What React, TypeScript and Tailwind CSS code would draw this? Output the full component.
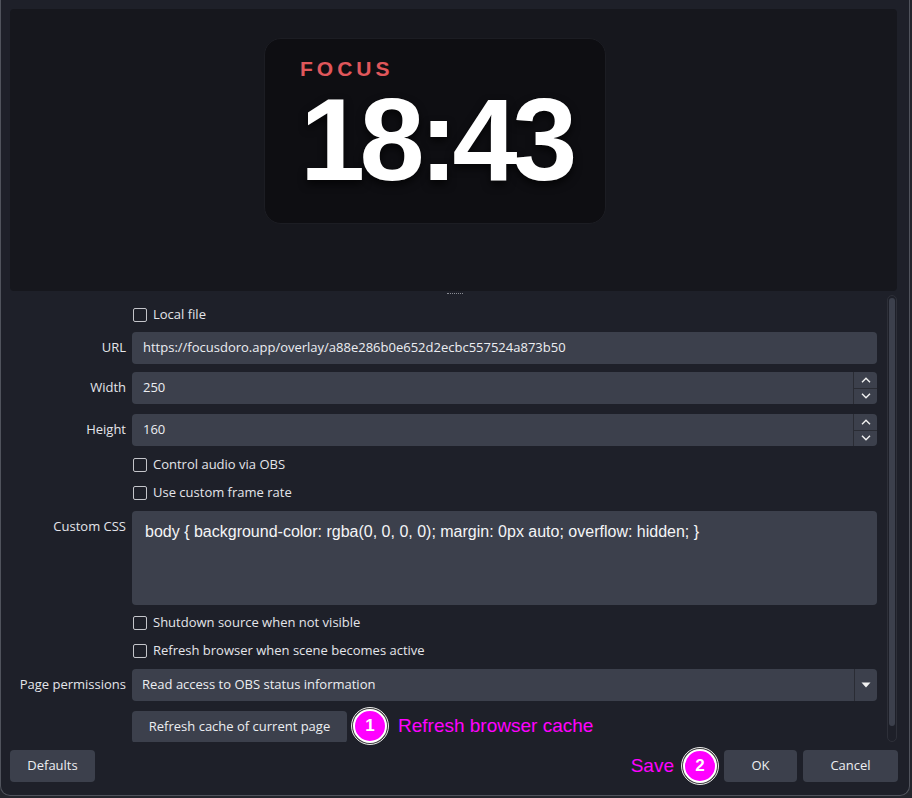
import React from 'react';

const ui = "font-['Open_Sans',sans-serif]";

function Checkbox({ label }: { label: string }) {
  return (
    <div className="flex h-[20px] items-center gap-[6px]">
      <span className="ml-[1px] h-[14px] w-[14px] rounded-[2px] border border-[#c4c5ca]" />
      <span className="text-[13px] text-[#e4e5ea]">{label}</span>
    </div>
  );
}

function Chevron({ up }: { up?: boolean }) {
  return (
    <svg width="10" height="6" viewBox="0 0 10 6" className="block">
      <path
        d={up ? 'M1 5.2 L5 1.2 L9 5.2' : 'M1 0.8 L5 4.8 L9 0.8'}
        fill="none"
        stroke="#f2f2f2"
        strokeWidth="1.4"
      />
    </svg>
  );
}

function Row({ label, top, children, alignTop }: { label?: string; top: string; children: React.ReactNode; alignTop?: boolean }) {
  return (
    <div className={`flex ${top} ${alignTop ? 'items-start' : 'items-center'}`}>
      <div className={`w-[125px] shrink-0 text-right text-[13px] text-[#e4e5ea] ${alignTop ? 'pt-[6px]' : ''}`}>{label}</div>
      <div className="ml-[6px] flex-1">{children}</div>
    </div>
  );
}

function SpinInput({ value }: { value: string }) {
  return (
    <div className="flex h-[32px] items-stretch rounded-[4px] bg-[#3c404c]">
      <div className="flex flex-1 items-center pl-[11px] text-[13px] text-[#eceef2]">{value}</div>
      <div className="flex w-[24px] flex-col border-l border-[#2a2c34]">
        <div className="flex flex-1 items-center justify-center border-b border-[#2a2c34]">
          <Chevron up />
        </div>
        <div className="flex flex-1 items-center justify-center">
          <Chevron />
        </div>
      </div>
    </div>
  );
}

function Marker({ n }: { n: string }) {
  return (
    <div className="flex h-[38px] w-[38px] items-center justify-center rounded-full border border-[#e8e8e8] bg-[#3a3a3a] p-[1px]">
      <div className="flex h-full w-full items-center justify-center rounded-full border-[2px] border-white bg-[#ff00ff] font-['Liberation_Sans',sans-serif] text-[17px] font-bold text-white">
        {n}
      </div>
    </div>
  );
}

export default function App() {
  return (
    <div className={`relative h-[798px] w-[912px] overflow-hidden bg-[#24262d] ${ui}`}>
      <div className="flex h-[796px] w-[910px] flex-col rounded-b-[10px] border-x border-b border-[#50535c] bg-[#1e2029]">
        {/* preview */}
        <div className="ml-[9px] mt-[9px] h-[282px] w-[887px] rounded-[4px] bg-[#16171d] pl-[254px] pt-[29px]">
          <div className="h-[186px] w-[342px] rounded-[17px] border border-[#1c1d23] bg-[#0e0e12] pl-[35px] pt-[19px]">
            <div className="font-['Liberation_Sans',sans-serif] text-[21px] font-bold leading-[21px] tracking-[4px] text-[#e0575b]">
              FOCUS
            </div>
            <div className="mt-[16px] font-['Liberation_Sans',sans-serif] text-[117px] font-bold leading-[90px] tracking-[-5.5px] text-white [text-shadow:0_4px_8px_rgba(0,0,0,0.7)]">
              18:43
            </div>
          </div>
        </div>

        {/* splitter */}
        <div className="flex h-[4px] items-center justify-center">
          <div className="h-[1px] w-[16px] border-t border-dotted border-[#8a8c94]" />
        </div>

        {/* form */}
        <div className="flex h-[447px]">
          <div className="flex-1 overflow-hidden pr-[10px]">
            <Row top="mt-[10px]">
              <Checkbox label="Local file" />
            </Row>
            <Row label="URL" top="mt-[7px]">
              <div className="flex h-[32px] items-center rounded-[4px] bg-[#3c404c] pl-[11px] text-[13px] text-[#eceef2]">
                https://focusdoro.app/overlay/a88e286b0e652d2ecbc557524a873b50
              </div>
            </Row>
            <Row label="Width" top="mt-[8px]">
              <SpinInput value="250" />
            </Row>
            <Row label="Height" top="mt-[10px]">
              <SpinInput value="160" />
            </Row>
            <Row top="mt-[9px]">
              <Checkbox label="Control audio via OBS" />
            </Row>
            <Row top="mt-[8px]">
              <Checkbox label="Use custom frame rate" />
            </Row>
            <Row label="Custom CSS" top="mt-[8px]" alignTop>
              <div className="h-[94px] rounded-[4px] bg-[#3c404c] pl-[13px] pt-[9px] font-['Liberation_Sans',sans-serif] text-[16px] text-[#f4f5f7]">
                body &#123; background-color: rgba(0, 0, 0, 0); margin: 0px auto; overflow: hidden; &#125;
              </div>
            </Row>
            <Row top="mt-[8px]">
              <Checkbox label="Shutdown source when not visible" />
            </Row>
            <Row top="mt-[8px]">
              <Checkbox label="Refresh browser when scene becomes active" />
            </Row>
            <Row label="Page permissions" top="mt-[8px]">
              <div className="flex h-[32px] items-stretch rounded-[4px] bg-[#3c404c]">
                <div className="flex flex-1 items-center pl-[10px] text-[13px] text-[#eceef2]">
                  Read access to OBS status information
                </div>
                <div className="flex w-[23px] items-center justify-center border-l border-[#2a2c34]">
                  <svg width="10" height="6" viewBox="0 0 10 6">
                    <path d="M0.5 0.5 H9.5 L5 5.5 Z" fill="#f2f2f2" />
                  </svg>
                </div>
              </div>
            </Row>
            <Row top="mt-[10px]">
              <div className="flex h-[32px] w-[215px] items-center justify-center rounded-[4px] bg-[#3c404c] text-[13px] text-[#eceef2]">
                Refresh cache of current page
              </div>
            </Row>
          </div>
          <div className="mr-[12px] w-[10px] rounded-[5px] border border-[#2e3039] p-[1px] pt-[2px]">
            <div className="h-[428px] rounded-[3px] bg-[#3c404c]" />
          </div>
        </div>

        {/* buttons */}
        <div className="flex items-center pl-[9px] pr-[11px] pt-[5px]">
          <div className="flex h-[32px] w-[85px] items-center justify-center rounded-[4px] bg-[#3c404c] text-[13px] text-[#eceef2]">
            Defaults
          </div>
          <div className="ml-auto mr-[7px] font-['Liberation_Sans',sans-serif] text-[19px] text-[#ff00ff]">Save</div>
          <Marker n="2" />
          <div className="ml-[5px] flex h-[32px] w-[73px] items-center justify-center rounded-[4px] bg-[#3c404c] text-[13px] text-[#eceef2]">
            OK
          </div>
          <div className="ml-[6px] flex h-[32px] w-[95px] items-center justify-center rounded-[4px] bg-[#3c404c] text-[13px] text-[#eceef2]">
            Cancel
          </div>
        </div>
      </div>

      {/* annotation overlay */}
      <div className="absolute left-[351px] top-[707px] flex items-center gap-[9px]">
        <Marker n="1" />
        <span className="font-['Liberation_Sans',sans-serif] text-[19px] text-[#ff00ff]">Refresh browser cache</span>
      </div>
    </div>
  );
}
